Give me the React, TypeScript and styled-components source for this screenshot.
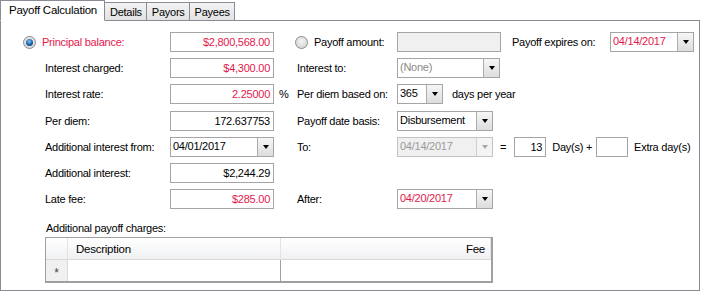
import React from "react";
import styled, { createGlobalStyle, css } from "styled-components";

const GlobalStyle = createGlobalStyle`
	body {
		margin: 0;
		background: #ffffff;
		font-family: "Liberation Sans", Arial, sans-serif;
		font-size: 11px;
		letter-spacing: -0.25px;
		color: #000;
	}
`;

const RED = "#e3184c";

const Page = styled.div`
	width: 701px;
	height: 292px;
	background: #fff;
`;

const TabStrip = styled.div`
	display: flex;
	align-items: flex-end;
	height: 21px;
	margin-bottom: -1px;
	position: relative;
	z-index: 1;
`;

const Tab = styled.div<{ $active?: boolean }>`
	box-sizing: border-box;
	display: flex;
	align-items: center;
	border: 1px solid #898c95;
	${(p) =>
		p.$active
			? css`
					height: 21px;
					padding: 0 7px 2px 8px;
					background: #fff;
					border-bottom-color: #fff;
					font-size: 11.5px;
			  `
			: css`
					height: 18px;
					padding: 0 4px 0 5px;
					margin-bottom: 1px;
					margin-left: -1px;
					background: linear-gradient(#f3f3f3, #e2e2e2);
					border-bottom: none;
			  `}
`;

const Panel = styled.div`
	box-sizing: border-box;
	width: 700px;
	height: 271px;
	border: 1px solid #898c95;
	padding: 11px 0 0 22px;
`;

const Form = styled.div`
	display: grid;
	grid-template-columns: 147px 104px 21px 102px 1fr;
	grid-auto-rows: 20px;
	row-gap: 6.2px;
	align-items: center;
`;

const Label = styled.div<{ $red?: boolean; $indent?: number }>`
	display: flex;
	align-items: center;
	white-space: nowrap;
	padding-left: ${(p) => p.$indent ?? 0}px;
	color: ${(p) => (p.$red ? RED : "#000")};
`;

const Radio = styled.span<{ $checked?: boolean }>`
	box-sizing: border-box;
	width: 13px;
	height: 13px;
	border-radius: 50%;
	border: 1px solid #8b8b8b;
	margin-right: 6px;
	display: inline-flex;
	align-items: center;
	justify-content: center;
	background: radial-gradient(circle at 50% 40%, #f4f4f4, #cfcfcf);
	&::after {
		content: "";
		display: ${(p) => (p.$checked ? "block" : "none")};
		width: 7px;
		height: 7px;
		border-radius: 50%;
		background: radial-gradient(circle at 45% 35%, #7cc4f5, #175fa8 55%, #0b3a72);
	}
`;

const TextBox = styled.div<{ $w: number; $red?: boolean; $grey?: boolean; $right?: boolean }>`
	box-sizing: border-box;
	width: ${(p) => p.$w}px;
	height: 20px;
	border: 1px solid #a5a5a5;
	background: ${(p) => (p.$grey ? "#f0f0f0" : "#fff")};
	color: ${(p) => (p.$red ? RED : "#000")};
	display: flex;
	align-items: center;
	justify-content: ${(p) => (p.$right ? "flex-end" : "flex-start")};
	padding: 0 3px 0 3px;
	white-space: nowrap;
`;

const ComboBox = styled.div<{ $w: number; $disabled?: boolean }>`
	box-sizing: border-box;
	width: ${(p) => p.$w}px;
	height: 20px;
	border: 1px solid ${(p) => (p.$disabled ? "#c2c2c2" : "#a5a5a5")};
	background: ${(p) => (p.$disabled ? "#f0f0f0" : "#fff")};
	display: flex;
`;

const ComboText = styled.div<{ $color?: string }>`
	flex: 1;
	display: flex;
	align-items: center;
	padding: 0 0 2px 2px;
	color: ${(p) => p.$color ?? "#000"};
	white-space: nowrap;
	overflow: hidden;
`;

const DropButton = styled.div<{ $disabled?: boolean }>`
	box-sizing: border-box;
	width: 16px;
	border-left: 1px solid ${(p) => (p.$disabled ? "#d0d0d0" : "#acacac")};
	background: ${(p) =>
		p.$disabled ? "#f4f4f4" : "linear-gradient(#f6f6f6, #dddddd)"};
	display: flex;
	align-items: center;
	justify-content: center;
	&::after {
		content: "";
		border-left: 3.5px solid transparent;
		border-right: 3.5px solid transparent;
		border-top: 4px solid ${(p) => (p.$disabled ? "#a8a8a8" : "#000")};
	}
`;

const Cell = styled.div<{ $gap?: number }>`
	display: flex;
	align-items: center;
	gap: ${(p) => p.$gap ?? 0}px;
	white-space: nowrap;
`;

const Spacer = styled.span<{ $w: number }>`
	display: inline-block;
	width: ${(p) => p.$w}px;
	flex: none;
`;

const ChargesLabel = styled.div`
	margin: 13px 0 2px 23px;
	height: 13px;
	line-height: 13px;
`;

const Table = styled.div`
	box-sizing: border-box;
	margin-left: 22px;
	width: 448px;
	height: 46px;
	border: 1px solid #a0a0a0;
	border-right-width: 2px;
	border-bottom-width: 2px;
	display: grid;
	grid-template-columns: 22px 213px 1fr;
	grid-template-rows: 22px 21px;
`;

const HeadCell = styled.div<{ $right?: boolean }>`
	display: flex;
	align-items: center;
	justify-content: ${(p) => (p.$right ? "flex-end" : "flex-start")};
	padding: 0 ${(p) => (p.$right ? 5 : 0)}px 0 ${(p) => (p.$right ? 0 : 8)}px;
	background: linear-gradient(#ffffff, #f0f1f3);
	border-right: 1px solid #e3e3e3;
	border-bottom: 1px solid #d8d8d8;
	font-size: 11.5px;
`;

const RowHead = styled.div`
	background: #f0f0f0;
	border-right: 1px solid #d8d8d8;
	display: flex;
	align-items: center;
	justify-content: center;
	font-size: 12px;
	color: #444;
	padding-top: 4px;
`;

const DataCell = styled.div<{ $last?: boolean }>`
	background: #fff;
	border-right: ${(p) => (p.$last ? "none" : "1px solid #a0a0a0")};
`;

const Combo = ({
	w,
	value,
	color,
	disabled,
}: {
	w: number;
	value: string;
	color?: string;
	disabled?: boolean;
}) => (
	<ComboBox $w={w} $disabled={disabled}>
		<ComboText $color={color}>{value}</ComboText>
		<DropButton $disabled={disabled} />
	</ComboBox>
);

const App = () => {
	return (
		<Page>
			<GlobalStyle />
			<TabStrip>
				<Tab $active>Payoff Calculation</Tab>
				<Tab>Details</Tab>
				<Tab>Payors</Tab>
				<Tab>Payees</Tab>
			</TabStrip>
			<Panel>
				<Form>
					{/* row 1 */}
					<Label $red>
						<Radio $checked />
						Principal balance:
					</Label>
					<TextBox $w={104} $red $right>
						$2,800,568.00
					</TextBox>
					<span />
					<Label>
						<Radio />
						Payoff amount:
					</Label>
					<Cell>
						<TextBox $w={104} $grey />
						<Spacer $w={11} />
						<Label style={{ width: 98 }}>Payoff expires on:</Label>
						<Combo w={84} value="04/14/2017" color={RED} />
					</Cell>

					{/* row 2 */}
					<Label $indent={22}>Interest charged:</Label>
					<TextBox $w={104} $red $right>
						$4,300.00
					</TextBox>
					<span />
					<Label $indent={2}>Interest to:</Label>
					<Cell>
						<Combo w={103} value="(None)" color="#8a8a8a" />
					</Cell>

					{/* row 3 */}
					<Label $indent={22}>Interest rate:</Label>
					<TextBox $w={104} $red $right>
						2.25000
					</TextBox>
					<Label $indent={5}>%</Label>
					<Label $indent={2}>Per diem based on:</Label>
					<Cell $gap={9}>
						<Combo w={46} value="365" />
						days per year
					</Cell>

					{/* row 4 */}
					<Label $indent={22}>Per diem:</Label>
					<TextBox $w={104} $right>
						172.637753
					</TextBox>
					<span />
					<Label $indent={2}>Payoff date basis:</Label>
					<Cell>
						<Combo w={96} value="Disbursement" />
					</Cell>

					{/* row 5 */}
					<Label $indent={22}>Additional interest from:</Label>
					<Combo w={104} value="04/01/2017" />
					<span />
					<Label $indent={2}>To:</Label>
					<Cell>
						<Combo w={96} value="04/14/2017" color="#9a9a9a" disabled />
						<Spacer $w={7} />
						<span>=</span>
						<Spacer $w={8} />
						<TextBox $w={32} $right>
							13
						</TextBox>
						<Spacer $w={6} />
						<span>Day(s) +</span>
						<Spacer $w={4} />
						<TextBox $w={32} />
						<Spacer $w={6} />
						<span>Extra day(s)</span>
					</Cell>

					{/* row 6 */}
					<Label $indent={22}>Additional interest:</Label>
					<TextBox $w={104} $right>
						$2,244.29
					</TextBox>
					<span />
					<span />
					<span />

					{/* row 7 */}
					<Label $indent={22}>Late fee:</Label>
					<TextBox $w={104} $red $right>
						$285.00
					</TextBox>
					<span />
					<Label $indent={2}>After:</Label>
					<Cell>
						<Combo w={96} value="04/20/2017" color={RED} />
					</Cell>
				</Form>

				<ChargesLabel>Additional payoff charges:</ChargesLabel>
				<Table>
					<HeadCell />
					<HeadCell>Description</HeadCell>
					<HeadCell $right>Fee</HeadCell>
					<RowHead>*</RowHead>
					<DataCell />
					<DataCell $last />
				</Table>
			</Panel>
		</Page>
	);
};

export default App;
